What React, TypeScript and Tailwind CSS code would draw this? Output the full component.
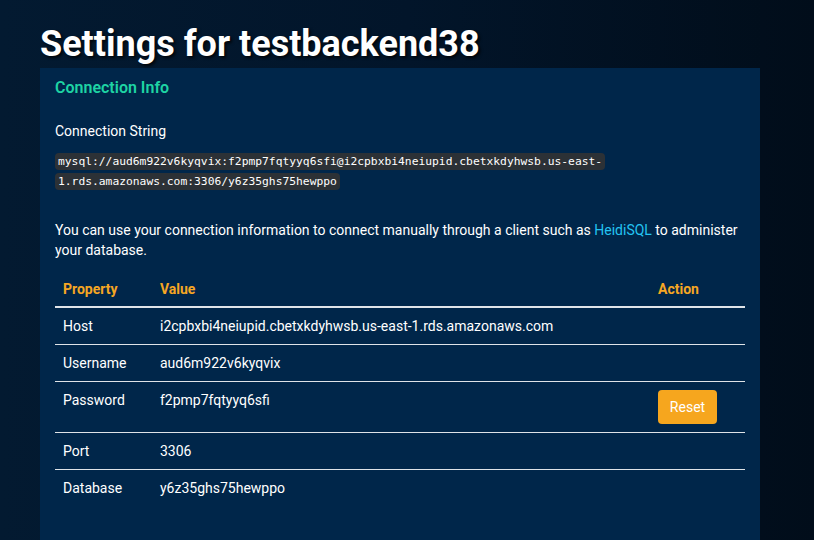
const rows = [
  { prop: 'Host', value: 'i2cpbxbi4neiupid.cbetxkdyhwsb.us-east-1.rds.amazonaws.com' },
  { prop: 'Username', value: 'aud6m922v6kyqvix' },
  { prop: 'Password', value: 'f2pmp7fqtyyq6sfi', action: true },
  { prop: 'Port', value: '3306' },
  { prop: 'Database', value: 'y6z35ghs75hewppo' },
];

export default function App() {
  return (
    <div className="min-h-[540px] bg-gradient-to-r from-[#031a31] via-[#02152a] to-[#010d1a] px-10 pt-6 text-white font-['Roboto',sans-serif]">
      <h1 className="text-[36px] leading-[40px] font-bold mb-1 [text-shadow:2px_2px_3px_rgba(0,0,0,0.8)]">
        Settings for testbackend38
      </h1>

      <div className="w-[720px] min-h-[472px] bg-[#00264a] px-[15px] pt-[8px] text-[14px] leading-5">
        <h2 className="text-[16px] leading-6 font-semibold text-[#1ed3a4]">Connection Info</h2>

        <p className="mt-[21px]">Connection String</p>
        <p className="mt-[11px] text-[11.3px] leading-5 font-['DejaVu_Sans_Mono',monospace]">
          <code className="bg-[#2c3136] px-[3px] py-[2px] rounded-sm font-['DejaVu_Sans_Mono',monospace] [box-decoration-break:clone]">
            mysql://aud6m922v6kyqvix:f2pmp7fqtyyq6sfi@i2cpbxbi4neiupid.cbetxkdyhwsb.us-east-1.rds.amazonaws.com:3306/y6z35ghs75hewppo
          </code>
        </p>

        <p className="mt-[28px]">
          You can use your connection information to connect manually through a client such as{' '}
          <span className="text-[#23c4f2]">HeidiSQL</span> to administer your database.
        </p>

        <table className="w-[690px] mt-[11px] border-collapse table-fixed">
          <thead>
            <tr className="border-b-2 border-[#dfe3e8]">
              <th className="w-[97px] text-left px-2 pt-2 pb-[7px] font-bold text-[#f6a623]">Property</th>
              <th className="w-[498px] text-left px-2 pt-2 pb-[7px] font-bold text-[#f6a623]">Value</th>
              <th className="text-left px-2 pt-2 pb-[7px] font-bold text-[#f6a623]">Action</th>
            </tr>
          </thead>
          <tbody>
            {rows.map((r, i) => (
              <tr key={r.prop} className={i === rows.length - 1 ? '' : 'border-b border-[#dfe3e8]'}>
                <td className="px-2 py-2 align-top">{r.prop}</td>
                <td className="px-2 py-2 align-top">{r.value}</td>
                <td className="px-2 py-2 align-top">
                  {r.action && (
                    <button className="h-[34px] w-[59px] rounded bg-[#f6a61e] text-white text-[14px]">Reset</button>
                  )}
                </td>
              </tr>
            ))}
          </tbody>
        </table>
      </div>
    </div>
  );
}
